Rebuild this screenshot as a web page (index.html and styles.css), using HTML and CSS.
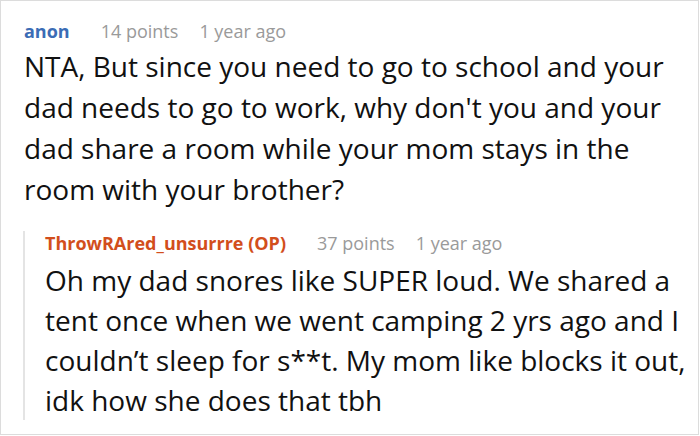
FILE: index.html
```html
<!DOCTYPE html>
<html>
<head>
<meta charset="utf-8">
<link rel="stylesheet" href="styles.css">
</head>
<body>
<div class="frame">
  <div class="comment">
    <div class="meta">
      <span class="author">anon</span>
      <span class="points">14 points</span>
      <span class="time">1 year ago</span>
    </div>
    <p class="body">NTA, But since you need to go to school and your dad needs to go to work, why don't you and your dad share a room while your mom stays in the room with your brother?</p>
    <div class="reply">
      <div class="meta">
        <span class="author op">ThrowRAred_unsurrre (OP)</span>
        <span class="points">37 points</span>
        <span class="time">1 year ago</span>
      </div>
      <p class="body">Oh my dad snores like SUPER loud. We shared a tent once when we went camping 2 yrs ago and I couldn’t sleep for s**t. My mom like blocks it out, idk how she does that tbh</p>
    </div>
  </div>
</div>
</body>
</html>
```
FILE: styles.css
```css
html, body {
  margin: 0;
  padding: 0;
  background: #ffffff;
}
.frame {
  box-sizing: border-box;
  width: 699px;
  height: 435px;
  border: 1px solid #dcdcdc;
  overflow: hidden;
  font-family: "Open Sans", "Noto Sans", sans-serif;
  color: #111111;
}
.comment {
  padding: 18px 0 0 23px;
}
.meta {
  display: flex;
  align-items: baseline;
  font-size: 18px;
  line-height: 24px;
  color: #9a9a9a;
}
.author {
  font-weight: 700;
  color: #3b6cb5;
  margin-right: 31px;
}
.author.op {
  color: #d24e1c;
}
.points {
  margin-right: 21px;
}
.body {
  margin: 3px 0 0;
  font-size: 28px;
  line-height: 41px;
  padding-right: 12px;
}
.reply {
  margin: 21px 0 0 -1px;
  border-left: 2px solid #e4e4e4;
  padding-left: 20px;
}
.reply .body {
  margin-top: 5px;
  line-height: 40px;
}
```
